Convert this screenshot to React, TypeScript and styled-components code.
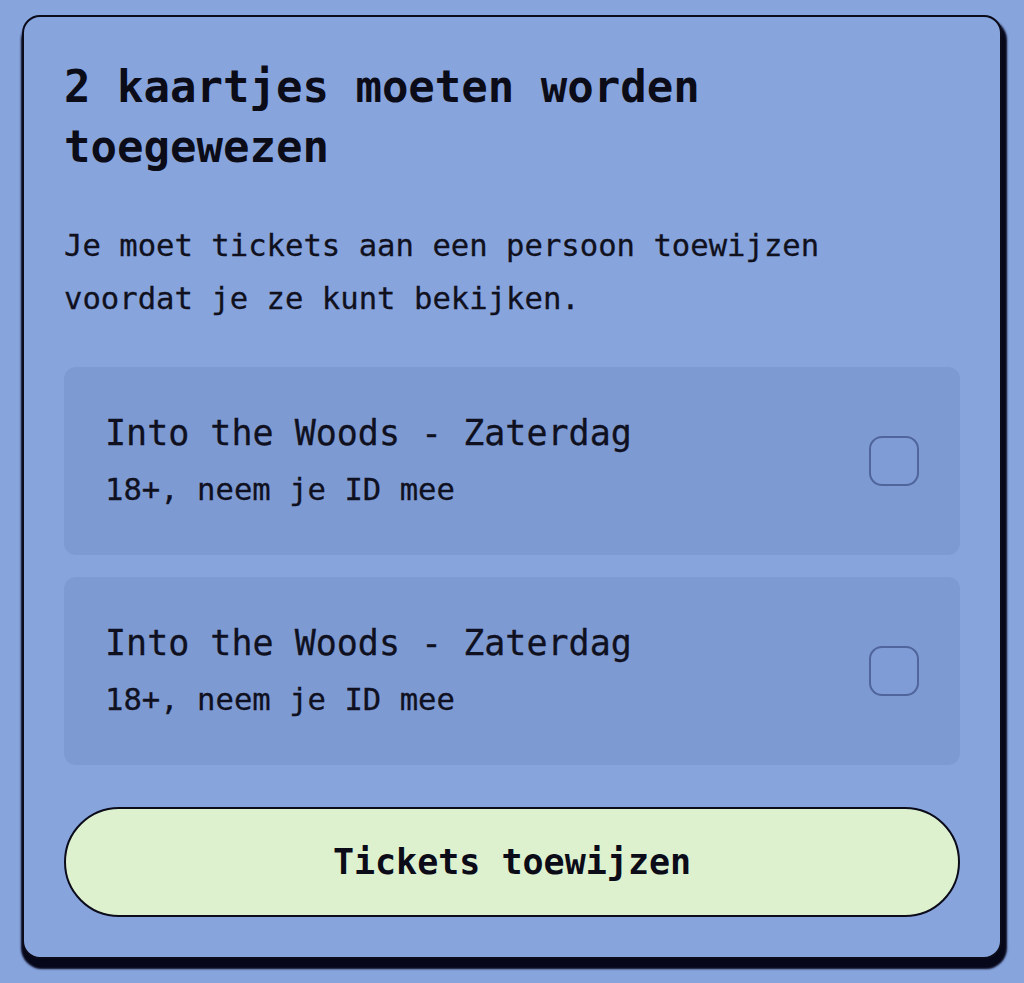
import React from "react";
import styled, { createGlobalStyle } from "styled-components";

const GlobalStyle = createGlobalStyle`
  html, body {
    margin: 0;
    padding: 0;
    background: #87a4dd;
  }
  body {
    font-family: "DejaVu Sans Mono", "Liberation Mono", monospace;
    color: #0e0f1c;
  }
`;

const Page = styled.div`
  box-sizing: border-box;
  width: 1024px;
  min-height: 983px;
  padding: 15px 22px 0 22px;
  background: #87a4dd;
`;

const Card = styled.section`
  box-sizing: border-box;
  width: 980px;
  background: #87a4dd;
  border: 2px solid #0b0b1a;
  border-radius: 18px;
  box-shadow: 2px 7px 2px 3px #07071a;
  padding: 40px 40px 40px 40px;
  display: flex;
  flex-direction: column;
`;

const Heading = styled.h1`
  margin: 0;
  font-size: 44px;
  line-height: 60px;
  font-weight: 700;
  color: #0b0c18;
`;

const Lead = styled.p`
  margin: 42px 0 0 0;
  font-size: 30.6px;
  line-height: 53px;
  color: #10111d;
  -webkit-text-stroke: 0.3px #10111d;
`;

const List = styled.div`
  margin-top: 42px;
  display: flex;
  flex-direction: column;
  gap: 22px;
`;

const Item = styled.label`
  box-sizing: border-box;
  height: 188px;
  border-radius: 12px;
  background: #7e9ad3;
  padding: 0 41px 0 41px;
  display: flex;
  align-items: center;
  justify-content: space-between;
`;

const ItemText = styled.div`
  display: flex;
  flex-direction: column;
  gap: 3px;
`;

const ItemTitle = styled.div`
  font-size: 35px;
  line-height: 54px;
  color: #0f1020;
  -webkit-text-stroke: 0.3px #0f1020;
`;

const ItemSub = styled.div`
  font-size: 30.6px;
  line-height: 54px;
  color: #0f1020;
  -webkit-text-stroke: 0.3px #0f1020;
`;

const Check = styled.span`
  box-sizing: border-box;
  width: 50px;
  height: 50px;
  border: 2px solid #4f659b;
  border-radius: 13px;
  background: #809cd6;
  flex: none;
`;

const Button = styled.button`
  margin-top: 42px;
  box-sizing: border-box;
  height: 110px;
  width: 100%;
  border: 2px solid #0b0b1a;
  border-radius: 55px;
  background: #ddf1cf;
  font-family: "DejaVu Sans Mono", "Liberation Mono", monospace;
  font-size: 35px;
  font-weight: 700;
  color: #0b0c18;
  cursor: pointer;
  padding: 0;
`;

const tickets = [
  { title: "Into the Woods - Zaterdag", sub: "18+, neem je ID mee" },
  { title: "Into the Woods - Zaterdag", sub: "18+, neem je ID mee" },
];

export default function App() {
  return (
    <>
      <GlobalStyle />
      <Page>
        <Card>
          <Heading>
            2 kaartjes moeten worden
            <br />
            toegewezen
          </Heading>
          <Lead>
            Je moet tickets aan een persoon toewijzen
            <br />
            voordat je ze kunt bekijken.
          </Lead>
          <List>
            {tickets.map((t, i) => (
              <Item key={i}>
                <ItemText>
                  <ItemTitle>{t.title}</ItemTitle>
                  <ItemSub>{t.sub}</ItemSub>
                </ItemText>
                <Check />
              </Item>
            ))}
          </List>
          <Button>Tickets toewijzen</Button>
        </Card>
      </Page>
    </>
  );
}
